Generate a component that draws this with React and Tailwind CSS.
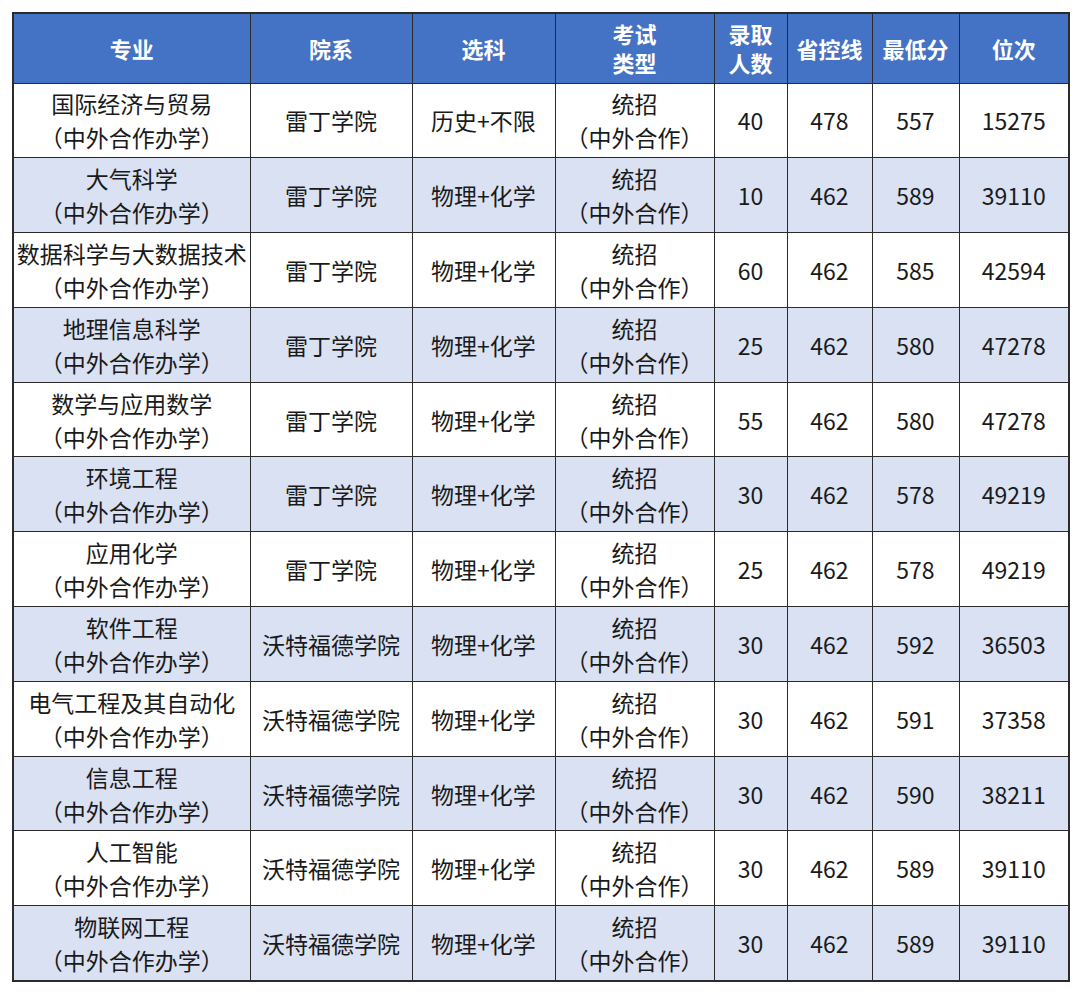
const rows = [
  ["国际经济与贸易", "雷丁学院", "历史+不限", "40", "478", "557", "15275"],
  ["大气科学", "雷丁学院", "物理+化学", "10", "462", "589", "39110"],
  ["数据科学与大数据技术", "雷丁学院", "物理+化学", "60", "462", "585", "42594"],
  ["地理信息科学", "雷丁学院", "物理+化学", "25", "462", "580", "47278"],
  ["数学与应用数学", "雷丁学院", "物理+化学", "55", "462", "580", "47278"],
  ["环境工程", "雷丁学院", "物理+化学", "30", "462", "578", "49219"],
  ["应用化学", "雷丁学院", "物理+化学", "25", "462", "578", "49219"],
  ["软件工程", "沃特福德学院", "物理+化学", "30", "462", "592", "36503"],
  ["电气工程及其自动化", "沃特福德学院", "物理+化学", "30", "462", "591", "37358"],
  ["信息工程", "沃特福德学院", "物理+化学", "30", "462", "590", "38211"],
  ["人工智能", "沃特福德学院", "物理+化学", "30", "462", "589", "39110"],
  ["物联网工程", "沃特福德学院", "物理+化学", "30", "462", "589", "39110"],
];

const widths = [237, 162, 143, 159, 73, 85, 87, 110];

export default function App() {
  return (
    <div
      className="w-[1080px] h-[993px] bg-white pt-[12px] pl-[12px]"
      style={{ fontFamily: '"Noto Sans CJK SC", "Noto Sans", sans-serif' }}
    >
      <table className="table-fixed border-collapse border-2 border-[#2b2b2b] text-center">
        <colgroup>
          {widths.map((w, i) => (
            <col key={i} style={{ width: w }} />
          ))}
        </colgroup>
        <thead>
          <tr className="h-[70px] bg-[#4472c4] text-white font-bold text-[22px] leading-[29px]">
            <th className="border border-[#2b2b2b]">专业</th>
            <th className="border border-[#2b2b2b]">院系</th>
            <th className="border border-[#2b2b2b]">选科</th>
            <th className="border border-[#2b2b2b]">考试<br />类型</th>
            <th className="border border-[#2b2b2b]">录取<br />人数</th>
            <th className="border border-[#2b2b2b]">省控线</th>
            <th className="border border-[#2b2b2b]">最低分</th>
            <th className="border border-[#2b2b2b]">位次</th>
          </tr>
        </thead>
        <tbody className="text-[23px] leading-[34px] text-[#1a1a1a]">
          {rows.map((r, i) => (
            <tr key={i} className={`h-[74.8px] ${i % 2 === 1 ? "bg-[#d9e1f2]" : "bg-white"}`}>
              <td className="border border-[#2b2b2b] whitespace-nowrap">
                {r[0]}
                <br />
                （中外合作办学）
              </td>
              <td className="border border-[#2b2b2b]">{r[1]}</td>
              <td className="border border-[#2b2b2b]">{r[2]}</td>
              <td className="border border-[#2b2b2b]">
                统招
                <br />
                （中外合作）
              </td>
              <td className="border border-[#2b2b2b]">{r[3]}</td>
              <td className="border border-[#2b2b2b]">{r[4]}</td>
              <td className="border border-[#2b2b2b]">{r[5]}</td>
              <td className="border border-[#2b2b2b]">{r[6]}</td>
            </tr>
          ))}
        </tbody>
      </table>
    </div>
  );
}
